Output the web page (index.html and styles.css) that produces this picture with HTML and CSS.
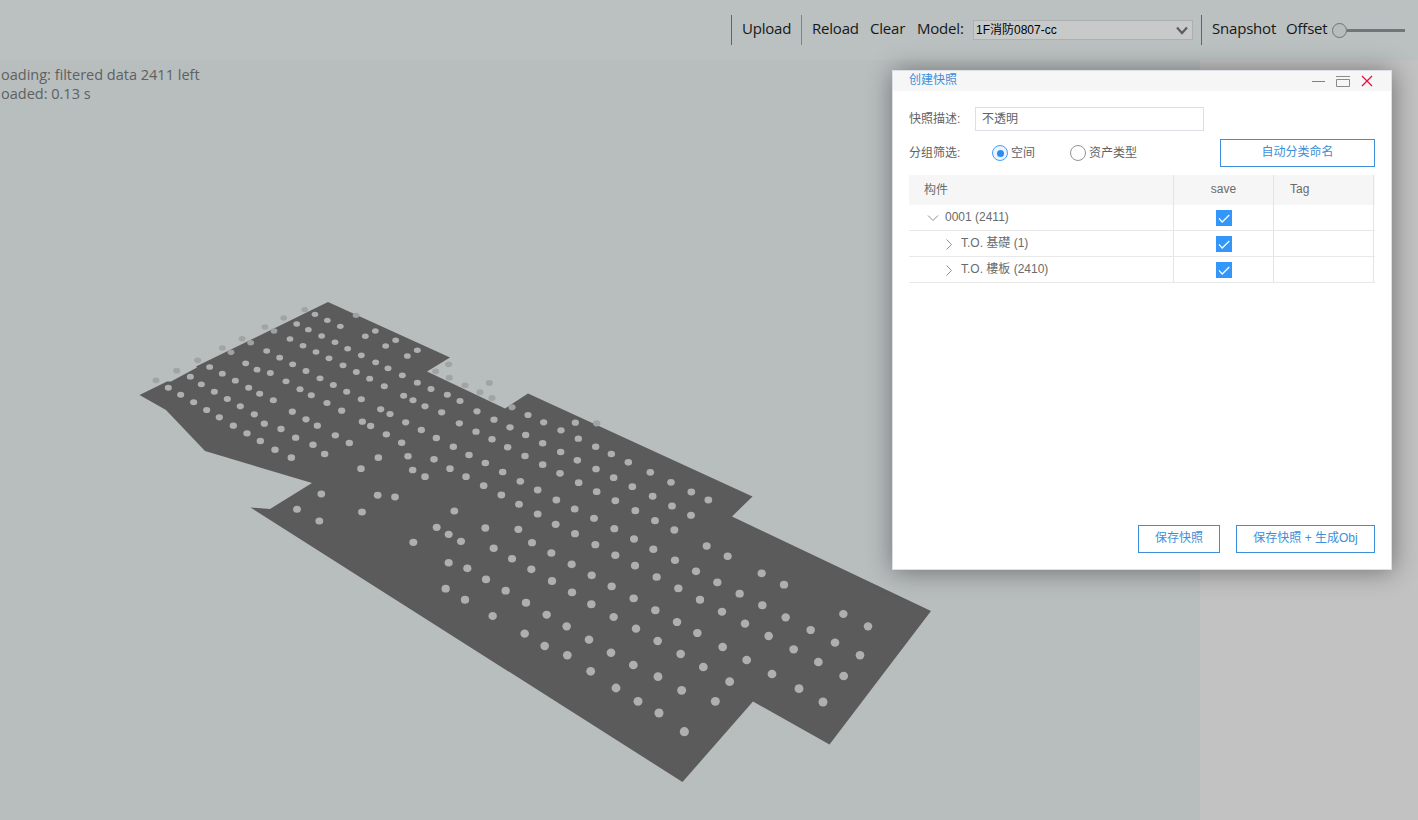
FILE: index.html
```html
<!DOCTYPE html>
<html lang="zh-CN">
<head>
<meta charset="utf-8">
<title>Model viewer</title>
<link rel="stylesheet" href="styles.css">
</head>
<body>
<div class="app">
  <header class="toolbar">
    <span class="sep"></span>
    <span class="tool upload">Upload</span>
    <span class="sep light"></span>
    <span class="tool reload">Reload</span>
    <span class="tool clear">Clear</span>
    <span class="tool model">Model:</span>
    <div class="select"><span>1F消防0807-cc</span>
      <svg width="12" height="9" viewBox="0 0 12 9"><path d="M1 1.500 6 7l5-5.500" fill="none" stroke="#5c5f60" stroke-width="2.200"/></svg>
    </div>
    <span class="sep last"></span>
    <span class="tool snapshot">Snapshot</span>
    <span class="tool offset">Offset</span>
    <div class="slider"><span class="knob"></span><span class="track"></span></div>
  </header>
  <main class="stage">
    <section class="viewport">
      <svg class="scene" width="1200" height="760" viewBox="0 60 1200 760">
        <path class="slab" d="M328 302 450 357.500 427 371.500 505 408.500 528 393.500 752.500 496.500 732 516.500 931 611 829.500 744.500 753 701.500 682.500 782 250.500 507.500 270 509 312 483 205 451 166 410 139.500 395 167 381.500 171 381.500 197 367.500 196 366.500Z"/>
        <g id="points"></g>
      </svg>
      <div class="log"><p>oading: filtered data 2411 left</p><p>oaded: 0.13 s</p></div>
    </section>
    <aside class="side"></aside>
  </main>
</div>

<div class="dialog">
  <div class="titlebar">
    <span class="title">创建快照</span>
    <svg class="winctl" width="62" height="14" viewBox="0 0 62 14" fill="none">
      <path d="M0 7.500H13" stroke="#808080"/>
      <path d="M24 2.500H38M24.500 5.500H37.500V12.500H24.500Z" stroke="#8a8a8a"/>
      <path d="M50 2 60 12M60 2 50 12" stroke="#e0123f" stroke-width="1.300"/>
    </svg>
  </div>
  <div class="body">
    <div class="row desc">
      <span class="label">快照描述:</span><div class="input">不透明</div>
    </div>
    <div class="row filter">
      <span class="label">分组筛选:</span>
      <span class="radio on"></span><span class="opt first">空间</span>
      <span class="radio"></span><span class="opt">资产类型</span>
      <div class="btn auto">自动分类命名</div>
    </div>
    <div class="table">
      <div class="tr head"><div class="td name">构件</div><div class="td save">save</div><div class="td tag">Tag</div></div>
      <div class="tr"><div class="td name l1"><svg class="arrow" width="12" height="12" viewBox="0 0 12 12"><path d="M1 3.500 6 8.500l5-5"/></svg>0001 (2411)</div><div class="td save"><span class="check"><svg width="16" height="16" viewBox="0 0 16 16"><path d="M3 8.300 6.200 12 13.300 5"/></svg></span></div><div class="td tag"></div></div>
      <div class="tr"><div class="td name l2"><svg class="arrow" width="12" height="12" viewBox="0 0 12 12"><path d="M3.500 1.500l5 5-5 5"/></svg>T.O. 基礎 (1)</div><div class="td save"><span class="check"><svg width="16" height="16" viewBox="0 0 16 16"><path d="M3 8.300 6.200 12 13.300 5"/></svg></span></div><div class="td tag"></div></div>
      <div class="tr"><div class="td name l2"><svg class="arrow" width="12" height="12" viewBox="0 0 12 12"><path d="M3.500 1.500l5 5-5 5"/></svg>T.O. 樓板 (2410)</div><div class="td save"><span class="check"><svg width="16" height="16" viewBox="0 0 16 16"><path d="M3 8.300 6.200 12 13.300 5"/></svg></span></div><div class="td tag"></div></div>
    </div>
    <div class="footer"><div class="btn keep">保存快照</div><div class="btn obj">保存快照 + 生成Obj</div></div>
  </div>
</div>
<script src="points.js"></script>
</body>
</html>
```
FILE: styles.css
```css
* { box-sizing: border-box; }
body { margin: 0; font-family: "Liberation Sans", "Noto Sans CJK SC", sans-serif; overflow: hidden; }
p { margin: 0; }
.app { width: 1418px; height: 820px; display: flex; flex-direction: column; background: #b8bdbe; }
.toolbar { height: 60px; background: #bbc0c1; display: flex; align-items: center; padding-left: 731px; }
.tool { font: 15px/20px "Open Sans", "Noto Sans", sans-serif; letter-spacing: -.2px; color: #161818; flex: none; white-space: nowrap; padding-bottom: 4px; }
.sep { width: 1px; height: 30px; background: #5f6465; flex: none; }
.sep.light { background: #7d8283; }
.sep.last { margin-left: 8px; }
.upload { width: 59px; margin-left: 10px; }
.reload { width: 58px; margin-left: 10px; }
.clear { width: 47px; }
.model { width: 56px; }
.select { width: 220px; height: 20px; flex: none; border: 1px solid #adb0b0; background: #c8c9c9; display: flex; align-items: center; justify-content: space-between; padding: 0 4px 0 2px; font-size: 12px; line-height: 16px; color: #000; }
.snapshot { width: 74px; margin-left: 10px; }
.offset { width: 46px; }
.slider { width: 73px; flex: none; display: flex; align-items: center; }
.knob { width: 15px; height: 15px; border: 1px solid #6d7374; border-radius: 50%; background: #b8bcbd; flex: none; }
.track { height: 3px; background: #707778; flex: 1; }
.stage { flex: 1; display: flex; }
.viewport { width: 1200px; position: relative; background: #b8bdbe; }
.side { flex: 1; background: #c3c2c2; }
.scene { display: block; }
.slab { fill: #5b5b5b; }
.dot { fill: #afafaf; }
.dot.half { fill: #9fa0a0; }
.dot.faint { fill: #a1a4a4; }
.log { position: absolute; left: 1px; top: 5px; font: 14.500px/19px "Open Sans", "Noto Sans", sans-serif; color: #5d6162; }
.dialog { position: absolute; left: 892px; top: 70px; width: 500px; height: 500px; background: #fff; border: 1px solid #dcdfe6; box-shadow: 1px 1px 24px rgba(0,0,0,.42); color: #606266; font-size: 12px; display: flex; flex-direction: column; }
.titlebar { height: 20px; background: #f6f6f6; display: flex; justify-content: space-between; align-items: center; padding: 0 17px 0 16px; }
.title { color: #3c8fd9; line-height: 18px; padding-bottom: 2px; }
.body { flex: 1; padding: 16px 16px 16px 16px; display: flex; flex-direction: column; }
.row { display: flex; align-items: center; }
.label { width: 66px; padding-bottom: 4px; }
.input { width: 229px; height: 24px; border: 1px solid #dcdfe6; padding: 0 6px; line-height: 22px; }
.filter { height: 28px; margin-top: 8px; }
.filter .label { width: 83px; }
.radio { width: 16px; height: 16px; border: 1px solid #909399; border-radius: 50%; display: flex; align-items: center; justify-content: center; flex: none; }
.radio.on { border-color: #409eff; background: #ecf5ff; }
.radio.on::after { content: ""; width: 7px; height: 7px; border-radius: 50%; background: #2a8cf0; }
.opt { margin-left: 3px; padding-bottom: 3px; white-space: nowrap; }
.opt.first { width: 59px; }
.btn { height: 28px; border: 1px solid #3c8fd9; color: #3c8fd9; text-align: center; line-height: 25px; white-space: nowrap; }
.auto { width: 155px; margin-left: auto; }
.table { width: 466px; margin-top: 8px; }
.tr { display: flex; height: 26px; border-bottom: 1px solid #e8e8e8; }
.tr.head { height: 30px; background: #f6f6f6; border-bottom: 0; }
.td { border-right: 1px solid #e4e4e4; display: flex; align-items: center; color: #6b6b6b; flex: none; }
.name { width: 265px; padding: 0 0 2px 15px; }
.name.l1 { padding-left: 18px; }
.name.l2 { padding: 0 0 4px 34px; }
.name.l2 .arrow { top: 2px; }
.save { width: 100px; justify-content: center; }
.tag { width: 100px; padding-left: 16px; }
.head .td { padding-bottom: 2px; }
.head .name { padding-bottom: 4px; }
.arrow { margin-right: 6px; flex: none; position: relative; top: 1px; }
.arrow path { fill: none; stroke: #909090; stroke-width: 1; }
.check { width: 16px; height: 16px; background: #3296fa; display: block; }
.check svg { display: block; }
.check path { fill: none; stroke: #fff; stroke-width: 1.200; }
.footer { margin-top: auto; display: flex; justify-content: flex-end; gap: 16px; }
.keep { width: 82px; }
.obj { width: 139px; }
```
FILE: points.js
```js
// Each tile holds device positions in thirds of a pixel from its own origin.
const tiles = [
  { x: 130, y: 290,
    faint: [524,59,461,84,405,111,336,146,277,174,203,211,140,242,78,271],
    half: [432,123,362,158,303,187,678,76],
    solid: [555,73,592,91,631,109,500,102,535,119,575,138,615,157,653,176,694,196,737,217,774,235,736,123,706,139,767,168,797,151,
      480,147,519,167,558,186,597,205,639,226,679,246,719,266,763,289,
      410,183,449,203,488,223,528,243,570,265,610,285,650,305,694,328,752,358,780,372,
      347,220,381,239,421,249,468,274,510,298,544,316,591,339,635,362,697,395,722,408,769,433,
      239,231,277,251,316,272,356,293,389,311,430,331,487,365,528,388,562,407,616,436,658,459,
      181,260,214,283,253,305,292,327,331,349,373,373,403,401,453,417,497,443,549,464,584,492,
      115,293,152,314,191,337,230,360,268,382,310,407,351,430,391,453,435,479,484,503,
      745,503,693,536,574,612,501,658,568,693,696,666,743,616,795,621] },
  { x: 390, y: 340,
    faint: [176,73,137,94,178,113,225,136,270,157,298,129,306,174,620,250],
    half: [366,202],
    solid: [82,31,52,48,37,106,82,128,123,147,172,164,210,183,261,214,312,239,360,262,407,285,458,310,512,336,562,361,618,387,671,413,727,440,788,469,
      414,225,461,247,513,271,565,296,617,320,664,342,715,367,781,397,556,248,
      41,167,69,181,105,199,155,217,208,250,258,275,306,298,353,322,405,348,458,374,510,400,566,428,620,455,676,482,736,512,795,542,
      47,247,94,270,139,294,190,320,237,345,286,369,338,396,391,424,443,450,499,480,554,507,612,535,673,566,732,597,790,628,
      35,308,54,349,132,358,180,386,228,410,281,437,334,465,387,493,443,522,497,553,555,581,616,614,676,646,735,677,
      68,390,105,410,193,513,140,562,176,583,213,604,286,564,311,625,366,656,424,688,385,568,426,608,484,639,545,673,605,706,70,607,176,668,232,685] },
  { x: 390, y: 560, faint: [], half: [],
    solid: [288,58,347,92,408,128,470,164,530,199,597,239,663,278,730,315,804,350,
      486,63,546,97,604,133,671,171,738,206,803,243,665,79,731,115,796,151,800,51,
      167,86,225,119,308,168,404,221,464,258,532,286,602,334,678,384,744,424,807,459] },
  { x: 640, y: 440, faint: [], half: [],
    solid: [93,127,154,156,205,180,96,198,153,226,103,270,200,318,263,349,105,361,168,394,232,427,299,461,367,496,437,532,512,570,585,608,660,646,
      365,400,432,434,610,522,684,559,115,445,180,479,246,515,315,551,386,588,461,628,535,666,611,708,
      111,546,172,579,248,621,320,660,396,702,477,746,549,786,122,642,190,681,269,725,226,784,125,751,133,875] }
];
const layer = document.getElementById("points");
for (const tile of tiles) {
  for (const kind of ["faint", "half", "solid"]) {
    for (let i = 0; i < tile[kind].length; i += 2) {
      const x = tile.x + tile[kind][i] / 3;
      const y = tile.y + tile[kind][i + 1] / 3;
      const near = (y - 310) / 425;
      const dot = document.createElementNS("http://www.w3.org/2000/svg", "ellipse");
      dot.setAttribute("cx", x);
      dot.setAttribute("cy", y);
      dot.setAttribute("rx", 3.3 + near * 1.3);
      dot.setAttribute("ry", 2.6 + near * 2);
      dot.setAttribute("class", "dot " + kind);
      layer.append(dot);
    }
  }
}
```
